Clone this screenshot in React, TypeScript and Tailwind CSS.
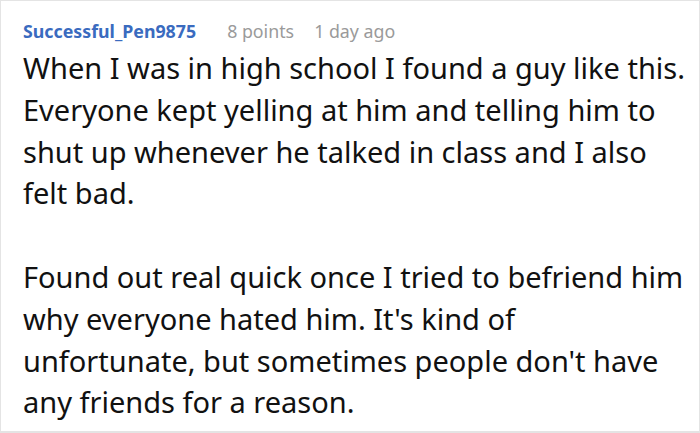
const App = () => {
  return (
    <div className="w-[700px] h-[433px] bg-white border border-b-2 border-[#e4e4e4] overflow-hidden font-['Noto_Sans',sans-serif]">
      <div className="pl-[22px] pt-[16px]">
        {/* comment header */}
        <div className="flex items-center text-[17.8px] leading-[28px]">
          <span className="font-bold text-[#3a6bbf]">Successful_Pen9875</span>
          <span className="ml-[31px] text-[#9a9a9a]">8 points</span>
          <span className="ml-[20px] text-[#9a9a9a]">1 day ago</span>
        </div>
        {/* comment body */}
        <div className="mt-[2px] w-[665px] text-[29px] leading-[41.8px] text-[#111]">
          <p>
            When I was in high school I found a guy like this. Everyone kept yelling at him and
            telling him to shut up whenever he talked in class and I also felt bad.
          </p>
          <p className="mt-[41.8px]">
            Found out real quick once I tried to befriend him why everyone hated him. It's kind
            of unfortunate, but sometimes people don't have any friends for a reason.
          </p>
        </div>
      </div>
    </div>
  );
};

export default App;
